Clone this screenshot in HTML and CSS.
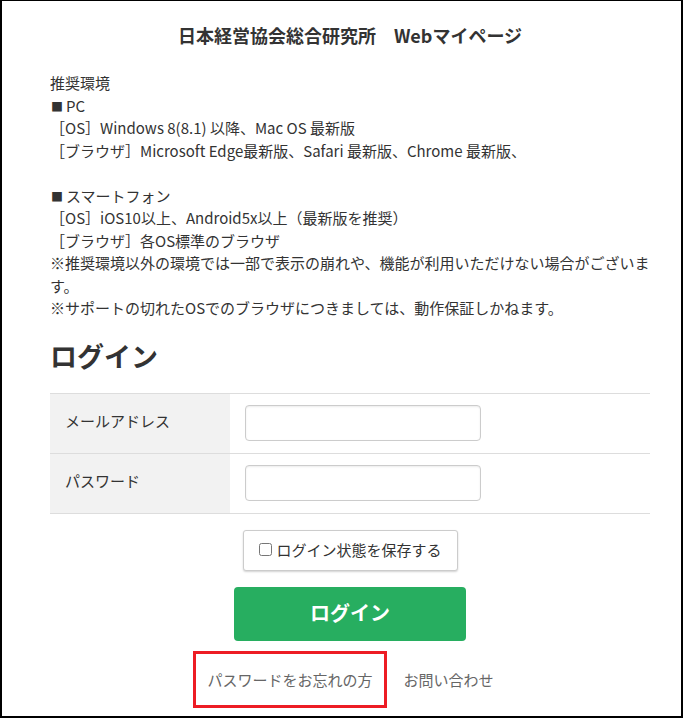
FILE: index.html
```html
<!DOCTYPE html>
<html lang="ja">
<head>
<meta charset="utf-8">
<title>Webマイページ</title>
<link rel="stylesheet" href="styles.css">
</head>
<body>
<div class="frame">
  <div class="container">
    <h1 class="site-title">日本経営協会総合研究所　Webマイページ</h1>
    <div class="notice">
      <p>推奨環境</p>
      <p><span class="sq">■</span>PC</p>
      <p>［OS］Windows 8(8.1) 以降、Mac OS 最新版</p>
      <p>［ブラウザ］Microsoft Edge最新版、Safari 最新版、Chrome 最新版、</p>
      <p>&nbsp;</p>
      <p><span class="sq">■</span>スマートフォン</p>
      <p>［OS］iOS10以上、Android5x以上（最新版を推奨）</p>
      <p>［ブラウザ］各OS標準のブラウザ</p>
      <p>※推奨環境以外の環境では一部で表示の崩れや、機能が利用いただけない場合がございます。</p>
      <p>※サポートの切れたOSでのブラウザにつきましては、動作保証しかねます。</p>
    </div>
    <h2 class="login-title">ログイン</h2>
    <div class="login-table">
      <div class="row">
        <div class="label">メールアドレス</div>
        <div class="field"><input type="text" class="input"></div>
      </div>
      <div class="row">
        <div class="label">パスワード</div>
        <div class="field"><input type="password" class="input"></div>
      </div>
    </div>
    <div class="remember-wrap">
      <label class="remember"><input type="checkbox" class="check"> ログイン状態を保存する</label>
    </div>
    <div class="btn-wrap">
      <button class="login-btn">ログイン</button>
    </div>
    <div class="links">
      <a class="link highlighted">パスワードをお忘れの方</a>
      <a class="link">お問い合わせ</a>
    </div>
  </div>
</div>
</body>
</html>
```

FILE: styles.css
```css
* { box-sizing: border-box; }
html, body {
  margin: 0;
  padding: 0;
  background: #fff;
}
body {
  font-family: "Noto Sans CJK JP", "Noto Sans", sans-serif;
  color: #333;
}
.frame {
  width: 683px;
  height: 718px;
  border-style: solid;
  border-color: #000;
  border-width: 1px 2px 2px 2px;
  overflow: hidden;
}
.container {
  width: 600px;
  margin-left: 48px;
}
.site-title {
  margin: 0;
  padding-top: 22px;
  text-align: center;
  font-size: 18px;
  font-weight: bold;
  line-height: 24px;
  color: #333;
}
.notice {
  margin-top: 25px;
  font-size: 15px;
  line-height: 22.5px;
}
.notice p {
  margin: 0;
}
.sq {
  font-size: 12px;
  line-height: 0;
  margin-left: 1px;
  margin-right: 3px;
}
.login-title {
  margin: 18px 0 0;
  font-size: 27px;
  line-height: 36px;
  font-weight: bold;
  color: #333;
}
.login-table {
  margin-top: 19px;
  border-top: 1px solid #ddd;
}
.row {
  display: flex;
  height: 60px;
  border-bottom: 1px solid #ddd;
}
.label {
  width: 180px;
  background: #f2f2f2;
  padding-left: 15px;
  padding-bottom: 5px;
  display: flex;
  align-items: center;
  font-size: 15px;
  color: #333;
}
.field {
  flex: 1;
  display: flex;
  align-items: center;
  padding-left: 15px;
}
.input {
  width: 236px;
  height: 36px;
  border: 1px solid #ccc;
  border-radius: 4px;
  box-shadow: inset 0 1px 2px rgba(0,0,0,0.08);
  background: #fff;
  font-size: 15px;
  padding: 0 8px;
}
.remember-wrap {
  display: flex;
  justify-content: center;
  margin-top: 16px;
}
.remember {
  display: flex;
  align-items: center;
  gap: 5px;
  width: 215px;
  height: 41px;
  padding-left: 15px;
  padding-bottom: 2px;
  border: 1px solid #ccc;
  border-radius: 3px;
  box-shadow: 0 1px 2px rgba(0,0,0,0.18);
  font-size: 15px;
  color: #333;
  background: #fff;
}
.check {
  margin: 0;
  width: 13px;
  height: 13px;
}
.btn-wrap {
  display: flex;
  justify-content: center;
  margin-top: 16px;
}
.login-btn {
  width: 232px;
  height: 54px;
  border: none;
  border-radius: 4px;
  background: #27ae60;
  color: #fff;
  font-family: "Noto Sans CJK JP", "Noto Sans", sans-serif;
  font-size: 20px;
  font-weight: bold;
  padding-bottom: 3px;
}
.links {
  display: flex;
  justify-content: center;
  align-items: center;
  gap: 17px;
  margin-top: 10px;
  padding-right: 13px;
}
.link {
  font-size: 15px;
  color: #666;
  text-decoration: none;
}
.highlighted {
  display: inline-flex;
  align-items: center;
  height: 57px;
  padding: 0 11px;
  border: 3px solid #ed1c24;
}
```
